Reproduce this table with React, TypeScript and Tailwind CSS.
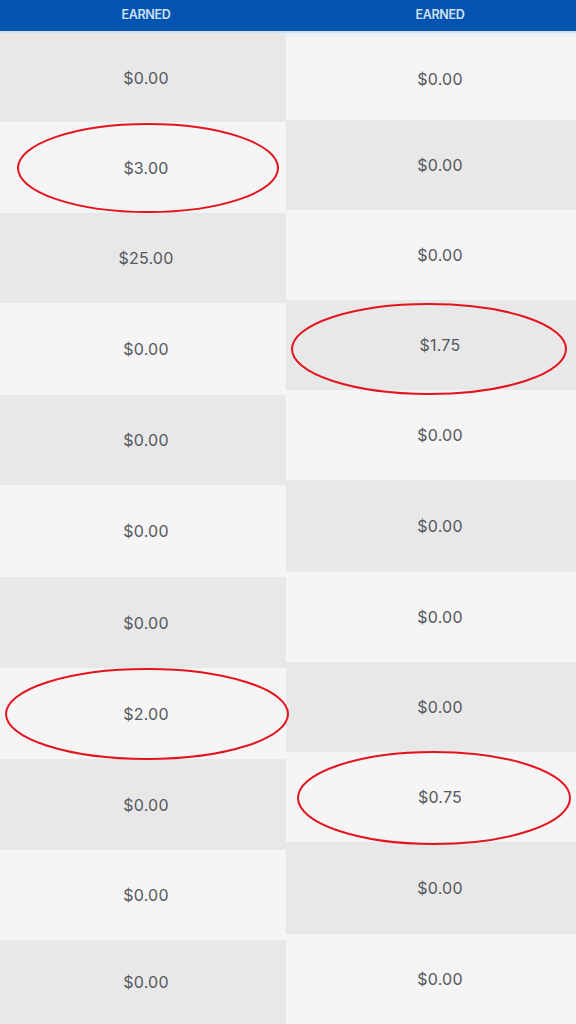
const left = [
  { h: 89, v: "$0.00" },
  { h: 91, v: "$3.00" },
  { h: 90, v: "$25.00" },
  { h: 92, v: "$0.00" },
  { h: 90, v: "$0.00" },
  { h: 92, v: "$0.00" },
  { h: 91, v: "$0.00" },
  { h: 91, v: "$2.00" },
  { h: 91, v: "$0.00" },
  { h: 90, v: "$0.00" },
  { h: 84, v: "$0.00" },
];

const right = [
  { h: 83, v: "$0.00" },
  { h: 90, v: "$0.00" },
  { h: 90, v: "$0.00" },
  { h: 90, v: "$1.75" },
  { h: 90, v: "$0.00" },
  { h: 92, v: "$0.00" },
  { h: 90, v: "$0.00" },
  { h: 90, v: "$0.00" },
  { h: 90, v: "$0.75" },
  { h: 92, v: "$0.00" },
  { h: 90, v: "$0.00" },
];

function Header({ gap, textPad }: { gap: boolean; textPad: string }) {
  return (
    <>
      <div className={`h-[31px] bg-[#0254b0] flex items-center justify-center ${textPad}`}>
        <span className="text-[12.5px] font-semibold tracking-tight text-[#cfe0f2]">EARNED</span>
      </div>
      <div className="h-[2px] bg-[#d4e2ee]" />
      {gap && <div className="h-[4px] bg-[#eef1f4]" />}
    </>
  );
}

function Column({ rows, startGray, width, textPad, gap }: { rows: { h: number; v: string }[]; startGray: boolean; width: string; textPad: string; gap: boolean }) {
  return (
    <div className={`flex flex-col ${width}`}>
      <Header gap={gap} textPad={textPad} />
      {rows.map((r, i) => {
        const gray = startGray ? i % 2 === 0 : i % 2 === 1;
        return (
          <div
            key={i}
            className={`flex items-center justify-center text-[16px] tracking-[0.2px] text-[#55585c] ${textPad} ${gray ? "bg-[#e8e8e8]" : "bg-[#f5f5f5]"}`}
            style={{ height: r.h }}
          >
            {r.v}
          </div>
        );
      })}
    </div>
  );
}

export default function App() {
  return (
    <div className="relative w-[576px] h-[1024px] overflow-hidden bg-[#f5f5f5]" style={{ fontFamily: "Inter, 'Noto Sans', sans-serif" }}>
      <div className="flex">
        <Column rows={left} startGray width="w-[286px]" textPad="pl-[6px]" gap={false} />
        <Column rows={right} startGray={false} width="w-[290px]" textPad="pl-[18px]" gap />
      </div>

      {/* red annotation circles */}
      <svg className="absolute inset-0 pointer-events-none" width="576" height="1024">
        <g fill="none" stroke="#e4141e" strokeWidth="2">
          <ellipse cx="148" cy="168" rx="130" ry="44" />
          <ellipse cx="429" cy="349" rx="137" ry="45" />
          <ellipse cx="147" cy="714" rx="141" ry="45" />
          <ellipse cx="434" cy="798" rx="136" ry="46" />
        </g>
      </svg>
    </div>
  );
}
